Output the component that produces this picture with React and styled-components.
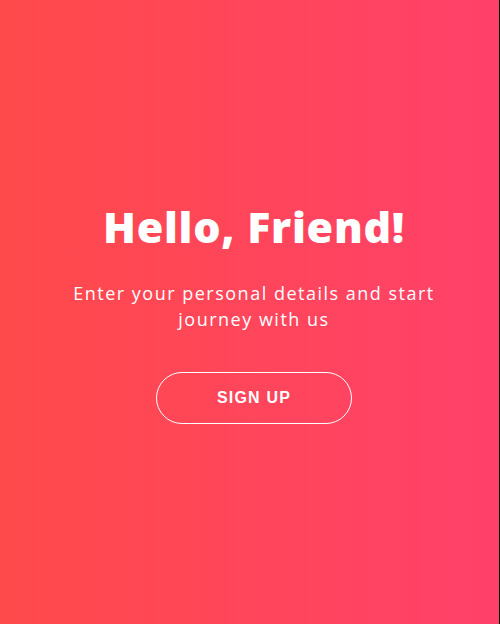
import React from 'react';
import styled, { createGlobalStyle } from 'styled-components';

const GlobalStyle = createGlobalStyle`
  * { box-sizing: border-box; }
  html, body {
    margin: 0;
    padding: 0;
    background: #000;
  }
`;

const Panel = styled.div`
  width: 499px;
  height: 624px;
  display: flex;
  flex-direction: column;
  align-items: center;
  justify-content: flex-start;
  text-align: center;
  color: #fff;
  background: linear-gradient(to right, #ff4a4b, #ff416a);
  padding: 203px 31px 0 40px;
`;

const Title = styled.h1`
  margin: 0;
  font-family: "Open Sans", "DejaVu Sans", sans-serif;
  font-weight: 800;
  font-size: 43px;
  line-height: 48px;
  letter-spacing: 0.7px;
`;

const Text = styled.p`
  margin: 29px 0 40px;
  font-family: "Open Sans", "DejaVu Sans", sans-serif;
  font-weight: 400;
  font-size: 18px;
  line-height: 26px;
  letter-spacing: 1.5px;
  max-width: 410px;
`;

const GhostButton = styled.button`
  width: 196px;
  height: 52px;
  border: 1px solid #fff;
  border-radius: 26px;
  background: transparent;
  color: #fff;
  font-family: "Liberation Sans", Arial, sans-serif;
  font-weight: 700;
  font-size: 16px;
  letter-spacing: 1.2px;
  text-transform: uppercase;
  cursor: pointer;
`;

export default function App() {
  return (
    <>
      <GlobalStyle />
      <Panel>
        <Title>Hello, Friend!</Title>
        <Text>Enter your personal details and start journey with us</Text>
        <GhostButton>Sign Up</GhostButton>
      </Panel>
    </>
  );
}
